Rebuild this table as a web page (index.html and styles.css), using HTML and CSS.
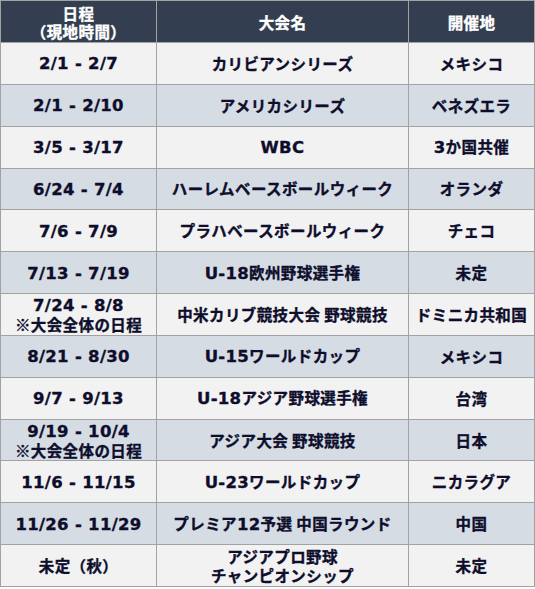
FILE: index.html
```html
<!DOCTYPE html>
<html lang="ja">
<head>
<meta charset="utf-8">
<link rel="stylesheet" href="styles.css">
</head>
<body>
<table class="schedule">
  <colgroup>
    <col class="c-date">
    <col class="c-name">
    <col class="c-place">
  </colgroup>
  <thead>
    <tr>
      <th>日程<br>（現地時間）</th>
      <th>大会名</th>
      <th>開催地</th>
    </tr>
  </thead>
  <tbody>
    <tr><td><span class="en">2/1 - 2/7</span></td><td>カリビアンシリーズ</td><td>メキシコ</td></tr>
    <tr><td><span class="en">2/1 - 2/10</span></td><td>アメリカシリーズ</td><td>ベネズエラ</td></tr>
    <tr><td><span class="en">3/5 - 3/17</span></td><td><span class="en">WBC</span></td><td><span class="en">3</span>か国共催</td></tr>
    <tr><td><span class="en">6/24 - 7/4</span></td><td>ハーレムベースボールウィーク</td><td>オランダ</td></tr>
    <tr><td><span class="en">7/6 - 7/9</span></td><td>プラハベースボールウィーク</td><td>チェコ</td></tr>
    <tr><td><span class="en">7/13 - 7/19</span></td><td><span class="en">U-18</span>欧州野球選手権</td><td>未定</td></tr>
    <tr><td><span class="en">7/24 - 8/8</span><br>※大会全体の日程</td><td>中米カリブ競技大会 野球競技</td><td>ドミニカ共和国</td></tr>
    <tr><td><span class="en">8/21 - 8/30</span></td><td><span class="en">U-15</span>ワールドカップ</td><td>メキシコ</td></tr>
    <tr><td><span class="en">9/7 - 9/13</span></td><td><span class="en">U-18</span>アジア野球選手権</td><td>台湾</td></tr>
    <tr><td><span class="en">9/19 - 10/4</span><br>※大会全体の日程</td><td>アジア大会 野球競技</td><td>日本</td></tr>
    <tr><td><span class="en">11/6 - 11/15</span></td><td><span class="en">U-23</span>ワールドカップ</td><td>ニカラグア</td></tr>
    <tr><td><span class="en">11/26 - 11/29</span></td><td>プレミア<span class="en">12</span>予選 中国ラウンド</td><td>中国</td></tr>
    <tr><td>未定（秋）</td><td>アジアプロ野球<br>チャンピオンシップ</td><td>未定</td></tr>
  </tbody>
</table>
</body>
</html>
```

FILE: styles.css
```css
html, body {
  margin: 0;
  padding: 0;
  background: #ffffff;
}

.schedule {
  border-collapse: collapse;
  table-layout: fixed;
  width: 534px;
  font-family: "Noto Sans CJK JP", sans-serif;
  font-weight: 700;
  font-size: 15.5px;
  line-height: 19px;
  letter-spacing: 0.4px;
  color: #0e0e2c;
  text-align: center;
  -webkit-text-stroke: 0.35px currentColor;
}

.c-date { width: 156px; }
.c-name { width: 252px; }
.c-place { width: 126px; }

.schedule th,
.schedule td {
  border: 1px solid #a2a2a2;
  padding: 0;
  vertical-align: middle;
  white-space: nowrap;
}

.schedule th {
  height: 41px;
  background: #333f50;
  color: #ffffff;
  font-weight: 700;
  line-height: 18px;
}

.schedule td {
  height: 40.85px;
}

.schedule tbody tr:nth-child(odd) td { background: #f2f2f2; }
.schedule tbody tr:nth-child(even) td { background: #d6dce4; }

.en {
  font-family: "DejaVu Sans", sans-serif;
  font-size: 16.5px;
  font-weight: 700;
  letter-spacing: 0.3px;
}
```
